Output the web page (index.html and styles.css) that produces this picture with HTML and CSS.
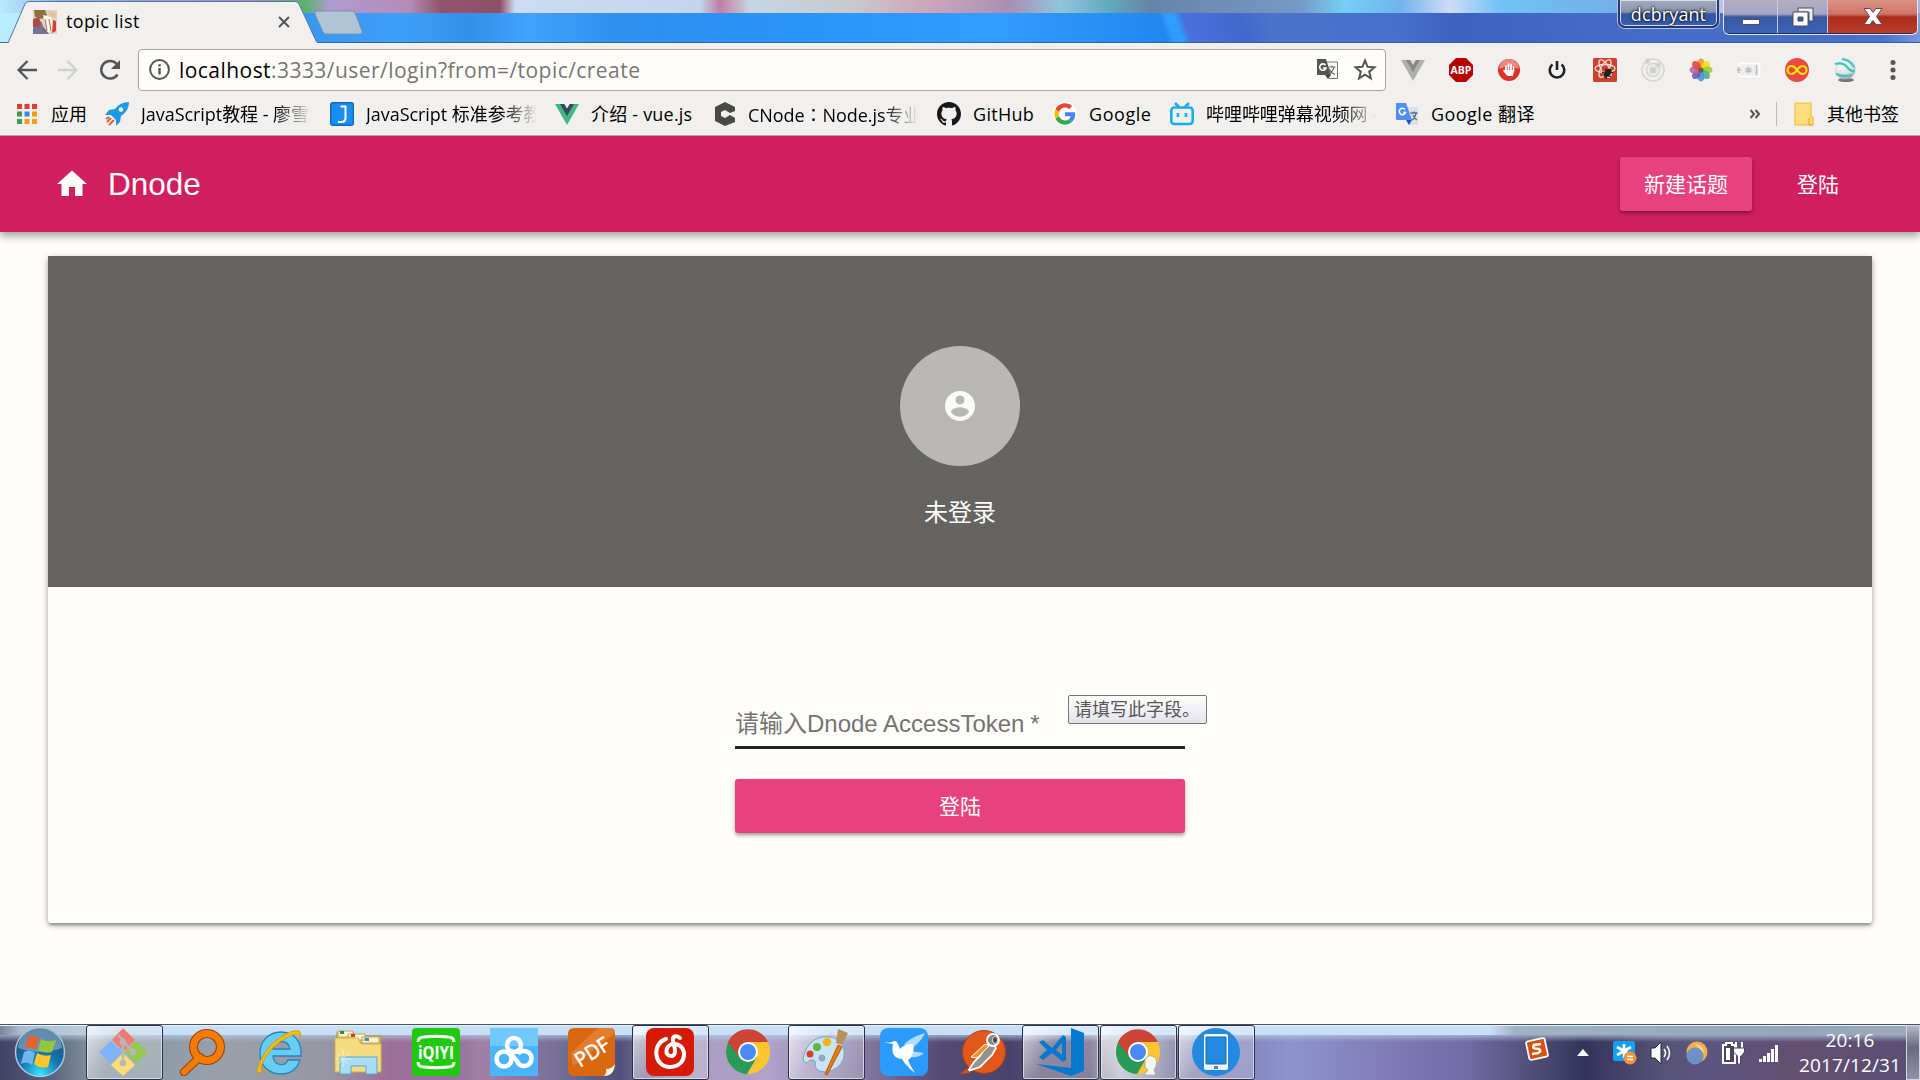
FILE: index.html
```html
<!DOCTYPE html>
<html lang="zh-CN">
<head>
<meta charset="utf-8">
<title>topic list</title>
<link rel="stylesheet" href="styles.css">
</head>
<body>
<header class="titlebar">
  <div class="tab">
    <svg class="tab-shape" width="320" height="43" viewBox="0 0 320 43"><path d="M0 43H8L25 4Q26 1.500 29 1.500H295Q298 1.500 299 4L317 43H320" fill="#f1f0ee" stroke="#53779f"/><path d="M9 43H317" stroke="#f1f0ee" stroke-width="2"/></svg>
    <svg class="favicon" width="24" height="24" viewBox="0 0 24 24"><path fill="#ded4cc" d="M0 0h24v24H0z"/><path fill="#8d6f42" d="M1 0h11l2 5-5 4-7-2z"/><path fill="#b54a4b" d="M0 9l6-2 3 9-4 5-5-4z"/><path fill="#fff6e4" d="M10 5l8 2 3 14-7 1z"/><path fill="#777293" d="M0 18l7-3 5 4 4 5H0z"/><path fill="#d44040" d="M20 10l3 1v10l-4 2z"/><path fill="#e6c29a" d="M15 1l8 2v5l-6-2z"/><path d="M12 9l2 12M16 9l2 12M8 12l4 9M3 10l3 8" stroke="#7d4c40" stroke-width=".8"/></svg>
    <span class="tab-title">topic list</span>
    <svg class="tab-close" width="12" height="12" viewBox="0 0 12 12"><path d="M1 1l10 10M11 1L1 11" stroke="#555" stroke-width="2"/></svg>
  </div>
  <svg class="new-tab" width="50" height="25" viewBox="0 0 50 25"><path d="M3 1h35q2 0 3 2l7 18q1 3-2 3H12q-2 0-3-2L1 4q-1-3 2-3z" fill="#afc4d4" stroke="#7f93a8"/></svg>
  <div class="window-tools">
    <div class="user-name">dcbryant</div>
    <div class="win-buttons">
      <div class="win-btn"><svg width="20" height="8" viewBox="0 0 20 8"><path d="M1.500 1.500h17v5h-17z" fill="#fff" stroke="#4a5160"/></svg></div>
      <div class="win-btn"><svg width="22" height="20" viewBox="0 0 22 20"><path d="M6 1h15v13h-4V5H6z" fill="#eee" stroke="#4a5160"/><path fill-rule="evenodd" d="M1 5h15v14H1zM6 10v4h5v-4z" fill="#fff" stroke="#4a5160"/></svg></div>
      <div class="win-btn win-close"><svg width="20" height="19" viewBox="0 0 20 19"><path d="M1 1.500h6l3 4 3-4h6L13.500 9.500l5.500 8h-6l-3-4-3 4H1l5.500-8z" fill="#fff" stroke="#5b4a55"/></svg></div>
    </div>
  </div>
</header>

<nav class="toolbar">
  <div class="nav-buttons">
    <svg width="20" height="20" viewBox="0 0 20 20" fill="none" stroke="#555" stroke-width="2.300"><path d="M20 10H2M10.500 1L1.600 10l8.900 9"/></svg>
    <svg width="20" height="20" viewBox="0 0 20 20" fill="none" stroke="#d1d0ce" stroke-width="2.300"><path d="M0 10h18M9.500 1l8.900 9-8.900 9"/></svg>
    <svg width="22" height="22" viewBox="0 0 22 22"><path d="M18.500 15.500A8.800 8.800 0 1 1 17.500 4.800" fill="none" stroke="#555" stroke-width="2.500"/><path d="M21 1v9h-9z" fill="#555"/></svg>
  </div>
  <div class="omnibox">
    <svg width="21" height="21" viewBox="0 0 21 21"><circle cx="10.500" cy="10.500" r="9.400" fill="none" stroke="#555" stroke-width="2"/><path d="M9.300 9h2.400v6.500H9.300zM9.300 5.200h2.400v2.400H9.300z" fill="#555"/></svg>
    <span class="url"><b>localhost</b>:3333/user/login?from=/topic/create</span>
    <div class="omni-actions">
      <svg width="23" height="22" viewBox="0 0 23 22"><path d="M9 4h12.500v16.500H13" fill="#fbfbfa" stroke="#777"/><path d="M1 1h9l5 16H2q-1 0-1-1z" fill="#555"/><path d="M9 17h6l-3 4z" fill="#444"/><path d="M9.500 7.200A3.200 3.200 0 1 0 10 10H7" fill="none" stroke="#fff" stroke-width="1.600"/><path d="M12.500 9h7M16 7.500V9m2 0q-1 5-5 7m0-5q2 4 6 5.500" fill="none" stroke="#666" stroke-width="1.200"/></svg>
      <svg width="24" height="23" viewBox="0 0 24 23"><path d="M12 2.500l2.600 6.300 6.900.5-5.300 4.400 1.700 6.600L12 16.700l-5.900 3.600 1.700-6.600-5.300-4.400 6.900-.5z" fill="none" stroke="#555" stroke-width="2"/></svg>
    </div>
  </div>
  <div class="extensions">
    <svg width="24" height="24" viewBox="0 0 24 24"><path d="M0 2h24L12 23z" fill="#b0b0af"/><path d="M5 2h5l2 4 2-4h5l-7 12z" fill="#888"/><path d="M9 2h6l-3 5z" fill="#ddd"/></svg>
    <svg width="24" height="24" viewBox="0 0 24 24"><path d="M7 0h10l7 7v10l-7 7H7l-7-7V7z" fill="#b60000"/><text x="12" y="16" class="abp">ABP</text></svg>
    <svg width="24" height="24" viewBox="0 0 24 24"><circle cx="12" cy="12" r="11" fill="#d93328"/><path d="M2 11a10 10 0 0 1 20 0q-10-5-20 0z" fill="#ed8b80"/><path d="M9 13V8m2.500 5V6M14 13V6.500m2.500 6.500V9M7 12.500l3 4" fill="none" stroke="#fff" stroke-width="1.700" stroke-linecap="round"/><path d="M8.200 12h9.100l-1.500 6h-5z" fill="#fff"/></svg>
    <svg width="24" height="24" viewBox="0 0 24 24" fill="none" stroke="#222" stroke-width="2.600"><path d="M7.500 6.500a7.300 7.300 0 1 0 9 0M12 3v9"/></svg>
    <svg width="24" height="24" viewBox="0 0 24 24"><rect width="24" height="24" rx="1.500" fill="#cb432e"/><g fill="none" stroke="#f6ddd8" stroke-width="1.300"><ellipse cx="12" cy="10.500" rx="10" ry="4"/><ellipse cx="12" cy="10.500" rx="10" ry="4" transform="rotate(60 12 10.500)"/><ellipse cx="12" cy="10.500" rx="10" ry="4" transform="rotate(120 12 10.500)"/></g><ellipse cx="14.500" cy="15" rx="3" ry="5" fill="#222" transform="rotate(40 14.500 15)"/><path d="M9 14l9 5M12 11l8 4M13 21l1-7M18 12l-6 5" stroke="#222" stroke-width="1.300"/></svg>
    <svg width="24" height="24" viewBox="0 0 24 24" fill="none" stroke="#d6d5d3" stroke-width="1.500"><circle cx="12" cy="12" r="11"/><circle cx="12" cy="12" r="6.500"/><circle cx="12" cy="12" r="3" fill="#cfcecd"/><circle cx="6.500" cy="3" r="2" fill="#ccc"/><circle cx="17" cy="7" r="2" fill="#ccc"/></svg>
    <svg width="24" height="24" viewBox="0 0 24 24" fill-opacity=".9"><ellipse cx="12" cy="5.500" rx="3.700" ry="5" fill="#f7941c"/><ellipse cx="12" cy="5.500" rx="3.700" ry="5" fill="#f3df1f" transform="rotate(45 12 12)"/><ellipse cx="12" cy="5.500" rx="3.700" ry="5" fill="#a3cb38" transform="rotate(90 12 12)"/><ellipse cx="12" cy="5.500" rx="3.700" ry="5" fill="#4bb583" transform="rotate(135 12 12)"/><ellipse cx="12" cy="5.500" rx="3.700" ry="5" fill="#4c96e0" transform="rotate(180 12 12)"/><ellipse cx="12" cy="5.500" rx="3.700" ry="5" fill="#6c5cb8" transform="rotate(225 12 12)"/><ellipse cx="12" cy="5.500" rx="3.700" ry="5" fill="#b866a8" transform="rotate(270 12 12)"/><ellipse cx="12" cy="5.500" rx="3.700" ry="5" fill="#e24a38" transform="rotate(315 12 12)"/><circle cx="12" cy="12" r="2.500" fill="#6b4a3a"/></svg>
    <svg width="24" height="24" viewBox="0 0 24 24"><path d="M2.500 5.500h20v13h-20z" fill="#efeeec" stroke="#fff" stroke-width="1.500"/><path d="M1 12h3M2.500 9l-2 3 2 3M11.500 8.500v7M8.500 10.300l6 3.500M14.500 10.300l-6 3.500M19.500 7v10" stroke="#bbb" stroke-width="1.500" fill="none"/></svg>
    <svg width="24" height="24" viewBox="0 0 24 24"><circle cx="12" cy="12" r="12" fill="#ea4a44"/><path d="M12 12c-2-3-3.500-4-5.500-4a4 4 0 0 0 0 8c2 0 3.500-1 5.500-4s3.500-4 5.500-4a4 4 0 0 1 0 8c-2 0-3.500-1-5.500-4z" fill="none" stroke="#f8e400" stroke-width="2.200"/></svg>
    <svg width="24" height="24" viewBox="0 0 24 24"><defs><radialGradient id="ball" cx=".4" cy=".3" r=".8"><stop offset="0" stop-color="#fff"/><stop offset=".6" stop-color="#dddcdb"/><stop offset="1" stop-color="#8b8b8b"/></radialGradient></defs><ellipse cx="13" cy="22" rx="8" ry="2" fill="#777"/><circle cx="12" cy="11" r="10.500" fill="url(#ball)"/><path d="M2 6q8-2 12 3t8 4M3 16q7 3 15 1M9 1q8 1 12 8" fill="none" stroke="#37c7bd" stroke-width="2.200"/></svg>
    <svg width="24" height="24" viewBox="0 0 24 24" fill="#555"><circle cx="12" cy="4.500" r="2.500"/><circle cx="12" cy="12" r="2.500"/><circle cx="12" cy="19.500" r="2.500"/></svg>
  </div>
</nav>

<nav class="bookmarks">
  <a class="bm bm-apps"><svg width="24" height="24" viewBox="0 0 24 24"><path fill="#e33b2e" d="M2 2h5v5H2zM9.500 2h5v5h-5zM17 2h5v5h-5z"/><path fill="#3d9b50" d="M2 9.500h5v5H2zM2 17h5v5H2z"/><path fill="#3a86f0" d="M9.500 9.500h5v5h-5z"/><path fill="#f2a00c" d="M17 9.500h5v5h-5zM9.500 17h5v5h-5zM17 17h5v5h-5z"/></svg><span>应用</span></a>
  <a class="bm bm-js"><svg width="24" height="24" viewBox="0 0 24 24"><path d="M24 0q-9 0-14 7L4 8l-4 5 6 0 5 5v6l4-4 1-6q8-5 8-14z" fill="#1d9ae2"/><circle cx="16" cy="7.500" r="2.200" fill="#fff"/><path d="M2 20l4-4M4 23l5-5M1 17l3-2" stroke="#e2583c" stroke-width="1.800"/></svg><span class="fade">JavaScript教程 - 廖雪</span></a>
  <a class="bm bm-ref"><svg width="24" height="24" viewBox="0 0 24 24"><rect x=".7" y=".7" width="22.600" height="22.600" rx="2" fill="#1a8df2" stroke="#1269c1" stroke-width="1.400"/><path d="M10.500 4.500h5V16q0 4-4 4H8" fill="none" stroke="#fff" stroke-width="2"/></svg><span class="fade">JavaScript 标准参考教</span></a>
  <a class="bm bm-vue"><svg width="24" height="24" viewBox="0 0 24 24"><path d="M0 2h24L12 23z" fill="#41b883"/><path d="M5 2h5l2 4 2-4h5l-7 12z" fill="#35495e"/><path d="M9.300 2h5.400L12 6.500z" fill="#f1f0ee"/></svg><span>介绍 - vue.js</span></a>
  <a class="bm bm-cnode"><svg width="24" height="24" viewBox="0 0 24 24"><path d="M12 0l10 5v4l-5 2-5-3-4 2v4l4 2 5-3 5 3v4l-10 4L2 19V5z" fill="#474b42"/></svg><span class="fade">CNode<span class="colon" lang="zh-TW">：</span>Node.js专业</span></a>
  <a class="bm bm-github"><svg width="24" height="24" viewBox="0 0 16 16"><path fill="#191717" d="M8 0C3.580 0 0 3.580 0 8c0 3.540 2.290 6.530 5.470 7.590.4.070.55-.17.55-.38 0-.19-.01-.82-.01-1.490-2.010.37-2.530-.49-2.690-.94-.09-.23-.48-.94-.82-1.130-.28-.15-.68-.52-.01-.53.63-.01 1.080.58 1.230.82.72 1.210 1.870.87 2.330.66.07-.52.28-.87.51-1.070-1.780-.2-3.640-.89-3.640-3.950 0-.87.31-1.590.82-2.150-.08-.2-.36-1.020.08-2.120 0 0 .67-.21 2.200.82.64-.18 1.320-.27 2-.27s1.360.09 2 .27c1.530-1.040 2.200-.82 2.200-.82.44 1.100.16 1.920.08 2.120.51.56.82 1.270.82 2.150 0 3.070-1.870 3.750-3.650 3.950.29.25.54.73.54 1.480 0 1.070-.01 1.930-.01 2.200 0 .21.15.46.55.38A8.010 8.010 0 0 0 16 8c0-4.420-3.580-8-8-8z"/></svg><span>GitHub</span></a>
  <a class="bm bm-google"><svg width="24" height="24" viewBox="-3 -3 54 54"><circle cx="24" cy="24" r="27" fill="#fff"/><path fill="#EA4335" d="M24 9.500c3.540 0 6.710 1.220 9.210 3.600l6.850-6.850C35.900 2.380 30.470 0 24 0 14.620 0 6.510 5.380 2.560 13.220l7.980 6.190C12.430 13.720 17.740 9.500 24 9.500z"/><path fill="#4285F4" d="M46.980 24.550c0-1.570-.15-3.090-.38-4.550H24v9.020h12.940c-.58 2.960-2.260 5.480-4.780 7.180l7.730 6c4.510-4.180 7.090-10.360 7.090-17.650z"/><path fill="#FBBC05" d="M10.530 28.590c-.48-1.450-.76-2.990-.76-4.590s.27-3.140.76-4.590l-7.980-6.190C.92 16.460 0 20.120 0 24c0 3.880.92 7.540 2.560 10.780z"/><path fill="#34A853" d="M24 48c6.480 0 11.930-2.130 15.890-5.810l-7.730-6c-2.150 1.450-4.920 2.300-8.160 2.300-6.260 0-11.570-4.220-13.470-9.910l-7.980 6.190C6.510 42.620 14.620 48 24 48z"/></svg><span>Google</span></a>
  <a class="bm bm-bili"><svg width="24" height="24" viewBox="0 0 24 24"><rect x="1.300" y="5.500" width="21.400" height="16.500" rx="3" fill="none" stroke="#19aee8" stroke-width="2.600"/><path d="M5 1l4 4M19 1l-4 4M8 11v4M16 11v4" stroke="#19aee8" stroke-width="2.600"/></svg><span class="fade">哔哩哔哩弹幕视频网 -</span></a>
  <a class="bm bm-trans"><svg width="24" height="24" viewBox="0 0 24 24"><path d="M10 5h13v18H14z" fill="#e0e0e0"/><path d="M1 1h10l6 17H2q-1 0-1-1z" fill="#4f8ef5"/><path d="M11 18h6l-3 5z" fill="#2850c0"/><path d="M10 7.500A3.200 3.200 0 1 0 10.500 10.500H8" fill="none" stroke="#fff" stroke-width="1.500"/><path d="M15.500 11h7M19 9.500V11m2 0q-1 5-4 7m1-5q2 4 4 5" fill="none" stroke="#54708c" stroke-width="1.300"/></svg><span>Google 翻译</span></a>
  <div class="bm-end">
    <svg width="10" height="10" viewBox="0 0 10 10" fill="none" stroke="#555" stroke-width="2"><path d="M.5 1L4 5 .5 9M5.500 1L9 5 5.500 9"/></svg>
    <i class="separator"></i>
    <svg width="20" height="24" viewBox="0 0 20 24"><path d="M1 1h16v14h2v8H1z" fill="#fbdc7f" stroke="#eec136" stroke-width="1.200"/><path d="M15 16v7h4" fill="none" stroke="#dda80d"/></svg>
    <span>其他书签</span>
  </div>
</nav>

<main class="page">
  <div class="appbar">
    <svg class="home" width="36" height="36" viewBox="0 0 24 24"><path fill="#fffefb" d="M10 20v-6h4v6h5v-8h3L12 3 2 12h3v8z"/></svg>
    <h1>Dnode</h1>
    <button class="btn raised">新建话题</button>
    <button class="btn flat">登陆</button>
  </div>
  <section class="card">
    <div class="profile">
      <div class="avatar"><svg width="36" height="36" viewBox="0 0 24 24"><path fill="#fafaf7" d="M12 2C6.480 2 2 6.480 2 12s4.480 10 10 10 10-4.480 10-10S17.520 2 12 2zm0 3c1.660 0 3 1.340 3 3s-1.340 3-3 3-3-1.340-3-3 1.340-3 3-3zm0 14.200c-2.500 0-4.710-1.280-6-3.220.03-1.990 4-3.080 6-3.080 1.990 0 5.970 1.090 6 3.080-1.290 1.940-3.500 3.220-6 3.220z"/></svg></div>
      <div class="nick">未登录</div>
    </div>
    <form class="login">
      <div class="field">请输入Dnode AccessToken<span class="star"> *</span><div class="tip">请填写此字段。</div></div>
      <button type="button" class="btn raised wide">登陆</button>
    </form>
  </section>
</main>

<footer class="taskbar">
  <div class="start"><svg width="52" height="52" viewBox="0 0 52 52"><defs><radialGradient id="orb" cx=".5" cy=".95" r=".8"><stop offset="0" stop-color="#35e6ff"/><stop offset=".5" stop-color="#1478b0"/><stop offset="1" stop-color="#1d4f80"/></radialGradient></defs><circle cx="26" cy="26" r="24.500" fill="url(#orb)" stroke="#a7c8dc" stroke-width="1.500"/><path d="M4 22a22 20 0 0 1 44 0q-22 8-44 0z" fill="#bcd5e3" opacity=".45"/><path d="M14 11q5-3 11 1l-3 12q-5-4-11-1z" fill="#e8622c"/><path d="M27 13q6 4 15 1l-4 12q-7 2-14-2z" fill="#93c83d"/><path d="M10 26q5-3 11 1l-3 12q-5-4-11-1z" fill="#6fb8ee"/><path d="M23 27q7 4 14 2l-3 12q-8 2-14-3z" fill="#fbc72b"/></svg></div>
  <div class="apps">
    <div class="task active"><svg width="50" height="48" viewBox="0 0 50 48"><path d="M24 0l12 12-11 11-12-11z" fill="#ef7b74"/><path d="M12 13l11 11-11 12L0 24z" fill="#80b2fc"/><path d="M37 13l12 11-12 12-11-12z" fill="#93c953"/><path d="M24 25l12 12-12 11-12-11z" fill="#fbdc76"/><path d="M19 7l5 5v23M25 14l8 9" fill="none" stroke="#b7b7b7" stroke-width="2.500"/><circle cx="24" cy="14" r="3.300" fill="#b7b7b7"/><circle cx="34" cy="24" r="3.300" fill="#b7b7b7"/><circle cx="24" cy="35" r="3.300" fill="#b7b7b7"/></svg></div>
    <div class="task"><svg width="48" height="48" viewBox="0 0 48 48"><path d="M22 29L6 44" stroke="#a34300" stroke-width="8.500" stroke-linecap="round"/><circle cx="29" cy="19" r="13.500" fill="none" stroke="#a34300" stroke-width="9"/><path d="M22 29L6 44" stroke="#f47b05" stroke-width="6" stroke-linecap="round"/><circle cx="29" cy="19" r="13.500" fill="none" stroke="#f47b05" stroke-width="6.800"/></svg></div>
    <div class="task"><svg width="48" height="48" viewBox="0 0 48 48"><path fill-rule="evenodd" d="M25 4C38 4 46 13 45 28H17c1 10 12 11 15 4h12c-3 9-10 14-19 14C12 46 4 37 4 25S13 4 25 4zM17 21h17c-1-10-16-10-17 0z" fill="#66cdf5" stroke="#2583bd" stroke-width="1.300"/><path d="M8 42Q-3 50 4 34 13 13 34 4q14-5 10 7Q45 3 34 8 14 17 6 36q-4 10 4 6z" fill="#f6bd16" stroke="#dc9c0a"/></svg></div>
    <div class="task"><svg width="48" height="48" viewBox="0 0 48 48"><path d="M3 4h16l2 4h26v35H2z" fill="#d8b95a" stroke="#b79336"/><path d="M4 3h15v6H4zM14 6h17v6H14zM28 9h17v6H28z" fill="#f8f1d6" stroke="#c7a951"/><path d="M6 3h4v3H6z" fill="#2f8c37"/><path d="M17 6h4v3h-4z" fill="#d33d28"/><path d="M31 10h4v3h-4z" fill="#2f92d9"/><path d="M1 10h23l3 6h20v28H1z" fill="#f3dc82" stroke="#d0af4c"/><path d="M6 29h37v17H32v-8H17v8H6z" fill="#a7dcf3" stroke="#59a7cf"/><path d="M9 21v18M1 31h17M4 26l10 10M14 26L4 36" stroke="#fff" opacity=".6"/></svg></div>
    <div class="task"><svg width="48" height="48" viewBox="0 0 48 48"><rect width="48" height="48" rx="4" fill="#1fc90f"/><path d="M6 14q0-5 6-5 12-1.500 24 0 6 0 6 5M6 34q0 5 6 5 12 1.500 24 0 6 0 6-5" fill="none" stroke="#fff" stroke-width="3"/><text x="24" y="30.500" class="qiyi" textLength="36" lengthAdjust="spacingAndGlyphs">iQIYI</text></svg></div>
    <div class="task"><svg width="48" height="48" viewBox="0 0 48 48"><path fill="#4cb4fb" d="M0 0h48v48H0z"/><path fill="#70c8ff" d="M0 0h48v18H0z"/><g fill="none" stroke="#fff" stroke-width="4.500"><circle cx="24" cy="17" r="7"/><circle cx="14" cy="31" r="7.500"/><path d="M28 26a7.500 7.500 0 1 1-1 7L19 24"/></g></svg></div>
    <div class="task"><svg width="48" height="48" viewBox="0 0 48 48"><path d="M6 0h36q5 0 5 5v33l-9 10H6q-6 0-6-6V6q0-6 6-6z" fill="#d96810"/><path d="M3 25L30 0h12q5 0 5 5L5 38z" fill="#ee8f43" opacity=".55"/><path d="M47 36q-3 5-9 5 1 4-2 7 10 0 11-12z" fill="#fff1df"/><text x="24" y="31" class="pdf" transform="rotate(-32 24 24)">PDF</text></svg></div>
    <div class="task active"><svg width="48" height="48" viewBox="0 0 48 48"><rect width="48" height="48" rx="8" fill="#d51a06"/><path d="M20 11C6 15 7 39 24 39c18 0 18-23 4-23-9 0-10 12-3 12 6 0 4-8 2-15-1-5 3-6 7-3" fill="none" stroke="#fff" stroke-width="4" stroke-linecap="round"/></svg></div>
    <div class="task"><svg width="46" height="46" viewBox="0 0 46 46"><circle cx="23" cy="23" r="22" fill="#fbc531"/><path d="M23 23L4 12A22 22 0 0 0 22 45l10-17z" fill="#279b57"/><path d="M3 13A22 22 0 0 1 43 13H23L14 28z" fill="#cc4536"/><circle cx="23" cy="23" r="10" fill="#fff"/><circle cx="23" cy="23" r="8" fill="#4a8af5"/></svg></div>
    <div class="task active"><svg width="48" height="48" viewBox="0 0 48 48"><path d="M1 32C3 15 16 7 28 9c14 2 17 16 12 25-6 10-21 13-26 6-2-4 1-7-3-8-5-1-6 6-10 0z" fill="#c8e4f3" stroke="#6ba5c5"/><circle cx="8" cy="26" r="3.500" fill="#d93f30"/><circle cx="15" cy="19" r="4" fill="#63b445"/><circle cx="25" cy="14" r="4.300" fill="#f6b31c"/><circle cx="20" cy="30" r="3" fill="#a4a5bd" stroke="#7ba8c2"/><path d="M36 17l4 2-15 28-2-1z" fill="#e97b16" stroke="#b75606"/><path d="M36 1l10 4-6 12-6-2z" fill="#b6935b"/></svg></div>
    <div class="task"><svg width="48" height="48" viewBox="0 0 48 48"><rect width="48" height="48" rx="8" fill="#2c9bff"/><path d="M24 17q5-7 21-12-4 9-13 15zM30 23l14 2q-5 5-14 4z" fill="#b5dcff"/><path d="M1 14q7 1 11 0 4-3 6 2l2 5q4-5 12-5 3 2 1 8-1 6-5 8 2 6 7 13-9-7-13-14-12-1-9-15z" fill="#fff"/></svg></div>
    <div class="task"><svg width="48" height="48" viewBox="0 0 48 48"><circle cx="26" cy="24" r="21.500" fill="#e3571b" stroke="#ac4110"/><path d="M29 17l6-2 3 5-4 7-12 12-12 4 6-9 6-6z" fill="#929292" stroke="#fff" stroke-width="1.800"/><circle cx="35" cy="12" r="6" fill="#888" stroke="#fff" stroke-width="1.800"/><ellipse cx="37" cy="12" rx="2.500" ry="3.500" fill="#444" stroke="#ddd"/><path d="M13 29l14-13 4 2-12 12z" fill="#f5942b" stroke="#fff"/><path d="M2 46l7-6 3 5z" fill="#d34e13"/></svg></div>
    <div class="task active"><svg width="48" height="48" viewBox="0 0 48 48"><path d="M35 0l13 5v38l-13 5L0 36l35 4z" fill="#0878ce"/><path fill-rule="evenodd" d="M3 14l4-2 9 8L27 7l3 2v23l-3 2-11-9-9 7-4-3 8-7zM20 22l6 5V15z" fill="#0878ce"/></svg></div>
    <div class="task active"><svg width="46" height="46" viewBox="0 0 46 46"><circle cx="23" cy="23" r="22" fill="#fbc531"/><path d="M23 23L4 12A22 22 0 0 0 22 45l10-17z" fill="#279b57"/><path d="M3 13A22 22 0 0 1 43 13H23L14 28z" fill="#cc4536"/><circle cx="23" cy="23" r="10" fill="#fff"/><circle cx="23" cy="23" r="8" fill="#4a8af5"/><path d="M30 31q2-5 7-4 6 1 4 10l-2 4 2 5H29l4-5-3-3z" fill="#f5f5f0" stroke="#999" stroke-width=".7"/></svg></div>
    <div class="task active"><svg width="48" height="48" viewBox="0 0 48 48"><circle cx="24" cy="24" r="24" fill="#2489e1"/><rect x="12" y="6" width="24" height="36" rx="2" fill="#f3f7fa"/><path d="M14 9h20v27H14z" fill="#2489e1" stroke="#1b6bb8"/><path d="M22 38h4v3h-4z" fill="#4a87bd"/></svg></div>
  </div>
  <div class="tray">
    <svg width="24" height="24" viewBox="0 0 24 24"><rect x="2.500" y="2.500" width="19" height="19" rx="2" fill="#dd4d10" stroke="#fff" stroke-width="1.800" transform="rotate(-12 12 12)"/><path d="M16 7l-7 1q-2 3 1 3.500l4 .5q3 2-1 4l-6 1" fill="none" stroke="#fff" stroke-width="2.700"/></svg>
    <svg class="tray-up" width="12" height="8" viewBox="0 0 12 8"><path d="M6 0l6 7H0z" fill="#fff"/></svg>
    <svg width="24" height="24" viewBox="0 0 24 24"><rect width="22" height="20" rx="2" fill="#14a0f4"/><path d="M11 3v14M4 6l14 8M18 6L4 14" stroke="#fff" stroke-width="2.600"/><circle cx="17" cy="17" r="6.500" fill="#f59339"/><path d="M14 15.500h6M14 18.500h6" stroke="#fff" stroke-width="1.300"/></svg>
    <svg width="24" height="24" viewBox="0 0 24 24"><path d="M2 7h4l6-6v22l-6-6H2z" fill="#fff" stroke="#29263b"/><path d="M15 8q3 4 0 8M18 5q5 7 0 14" fill="none" stroke="#fff" stroke-width="1.500"/></svg>
    <svg width="24" height="24" viewBox="0 0 24 24"><circle cx="12" cy="11" r="10.500" fill="#f1af4b"/><path d="M10 3q9 1 9 10" fill="#ffd684"/><circle cx="10" cy="15" r="8.500" fill="#6f91c4"/></svg>
    <svg width="24" height="24" viewBox="0 0 24 24"><path d="M2 4h3V2h6v2h3v18H2z" fill="#4b4560" stroke="#fff" stroke-width="2"/><path d="M5 7h4v12H5z" fill="#fff"/><path d="M15 1v6M21 1v6" stroke="#fff" stroke-width="2"/><path d="M12.500 7h11v4l-3 4h-1v8h-3v-8l-4-4z" fill="#fff" stroke="#4b4560"/></svg>
    <svg width="24" height="24" viewBox="0 0 24 24" fill="#fff"><path d="M2 18h3v3H2zM6 15h3v6H6zM10 12h3v9h-3zM14 8h3v13h-3zM18 4h3v17h-3z"/></svg>
    <div class="clock"><div>20:16</div><div>2017/12/31</div></div>
    <div class="show-desktop"></div>
  </div>
</footer>
</body>
</html>
```
FILE: styles.css
```css
* { box-sizing: border-box; }
body {
  margin: 0;
  width: 1920px;
  height: 1080px;
  overflow: hidden;
  display: flex;
  flex-direction: column;
  background: #fffefb;
  font-family: "Open Sans", "Noto Sans CJK SC", sans-serif;
  color: #000;
}
svg { display: block; flex: none; }

/* window title bar */
.titlebar {
  height: 43px;
  display: flex;
  align-items: flex-start;
  border-bottom: 1px solid #2c67ae;
  background:
    linear-gradient(90deg, #b9e9fb 0, #8fb5ee 60px, #a28fc3 250px, #5cb16e 305px, #b19ad2 330px, #b58bb6 410px, #93556d 440px, #8f5066 500px, #cddbf3 515px, #c4d6ed 700px, #c17fa0 720px, #c5d6e4 750px, #c8c9cf 850px, #cda5bb 930px, #a98fb5 1010px, #92c5dc 1060px, #61a9bd 1110px, #6784a8 1150px, #7699c6 1300px, #74d0f6 1345px, #6fb3ed 1400px, #cfdcf6 1450px, #71c2f6 1500px, #72aee8 1620px, #bfc2dc 1720px, #a5b5de 1920px) 0 0 / 100% 13px no-repeat,
    linear-gradient(70deg, #0000 1098px, #309cff 1104px, #309cff 1112px, #4a70dc 1120px, #4268ce 1174px, #4b74ca 1200px, #4770cb 1322px, #3d62bf 1370px, #446bc7 1510px, #4a70c8 1770px, #91a5dd 1820px),
    linear-gradient(90deg, #b9ecfc 0, #b9ecfc 25px, #3995f2 300px, #3f9ff8 400px, #348fe8 470px, #41a3fd 530px, #2e8fee 620px, #2a94f9 800px, #339cff 1000px, #2087ef 1160px);
}
.tab {
  position: relative;
  width: 314px;
  height: 43px;
  padding: 0 24px 7px 33px;
  display: flex;
  align-items: center;
}
.tab-shape { position: absolute; left: 0; top: 0; }
.favicon, .tab-title, .tab-close { position: relative; }
.favicon { margin-top: 8px; }
.tab-title { margin: 6px 0 0 9px; font-size: 18px; line-height: 24px; letter-spacing: .35px; }
.tab-close { margin: 8px 0 0 auto; }
.new-tab { margin-top: 10px; }
.window-tools { margin-left: auto; display: flex; gap: 4px; padding-right: 2px; }
.user-name {
  width: 101px;
  height: 28px;
  border: 2px solid #273a6d;
  border-top: 0;
  border-radius: 0 0 7px 7px;
  box-shadow: inset 0 0 0 1px #d4ddf2, 0 0 0 1px #aebfe9;
  background: linear-gradient(#a3abb7 0, #8494b1 12px, #3455a6 14px, #385eb5);
  color: #fff;
  font-size: 18px;
  line-height: 28px;
  text-align: center;
  letter-spacing: .1px;
  text-shadow: 0 0 2px #000, 0 0 3px #000;
}
.win-buttons {
  height: 35px;
  display: flex;
  border: 1px solid #e0e6f5;
  border-top: 0;
  border-radius: 0 0 6px 6px;
  overflow: hidden;
  box-shadow: inset 0 0 0 1px #273052;
}
.win-btn {
  width: 50px;
  height: 33px;
  border-right: 1px solid #c1cce9;
  display: grid;
  place-items: center;
  background: linear-gradient(#b3adc0 0, #a3a6c4 14px, #3757a0 17px, #3c63b8);
}
.win-btn:first-child { width: 54px; padding-top: 10px; }
.win-close { width: 89px; border: 0; background: linear-gradient(#dc9286 0, #cf7466 14px, #a82d1d 17px, #bd3b28); }

/* navigation bar */
.toolbar {
  height: 54px;
  padding: 0 15px 0 17px;
  display: flex;
  align-items: center;
  background: #f1f0ee;
}
.nav-buttons { width: 121px; display: flex; gap: 21px; align-items: center; }
.omnibox {
  width: 1248px;
  height: 42px;
  margin-bottom: 1px;
  padding: 0 8px 0 10px;
  display: flex;
  align-items: center;
  border: 1px solid #a5a4a2;
  border-radius: 4px;
  background: #fffefb;
}
.url { margin-left: 9px; font-size: 21px; line-height: 28px; color: #777573; letter-spacing: .45px; white-space: nowrap; }
.url b { color: #000; font-weight: 400; }
.omni-actions { margin-left: auto; display: flex; gap: 14px; }
.extensions { margin-left: auto; display: flex; gap: 24px; }
.abp { font: bold 10.5px "Open Sans", sans-serif; fill: #fff; text-anchor: middle; }

/* bookmarks bar */
.bookmarks {
  height: 39px;
  padding: 0 21px 4px 15px;
  display: flex;
  align-items: center;
  background: #f1f0ee;
  border-bottom: 1px solid #a9a8a6;
  font-size: 18px;
  line-height: 26px;
  white-space: nowrap;
}
.bm { display: flex; align-items: center; overflow: hidden; letter-spacing: -.05px; }
.bm span { overflow: hidden; }
.fade { -webkit-mask-image: linear-gradient(90deg, #000 calc(100% - 36px), transparent); mask-image: linear-gradient(90deg, #000 calc(100% - 36px), transparent); }
.bm-apps { width: 90px; gap: 12px; }
.bm-js { width: 225px; gap: 12px; }
.bm-js span, .bm-ref span { width: 171px; }
.bm-ref { width: 225px; gap: 12px; }
.bm-vue { width: 158px; gap: 12px; letter-spacing: .2px; }
.bm-cnode { width: 224px; gap: 11px; }
.bm-cnode .fade { width: 170px; }
.bm .colon { font-family: "Noto Sans CJK TC", sans-serif; overflow: visible; }
.bm-github { width: 116px; gap: 12px; letter-spacing: .3px; }
.bm-google { width: 117px; gap: 12px; letter-spacing: .55px; }
.bm-bili { width: 225px; gap: 12px; }
.bm-bili span { width: 171px; }
.bm-trans { gap: 12px; letter-spacing: .45px; }
.bm-end { margin-left: auto; display: flex; align-items: center; }
.separator { width: 1px; height: 24px; margin: 0 17px 0 16px; background: #bbb; }
.bm-end span { margin-left: 13px; }

/* page */
.page { height: 888px; overflow: hidden; background: #fffefb; font-family: "Liberation Sans", "Noto Sans CJK SC", sans-serif; }
.appbar {
  height: 96px;
  padding: 0 36px 0 54px;
  display: flex;
  align-items: center;
  background: #d01f5f;
  color: #fffefb;
  box-shadow: 0 3px 6px -1px #0003, 0 6px 8px #00000024, 0 2px 14px #0000001f;
}
.appbar h1 { margin: 0 auto 0 18px; font-size: 31.500px; font-weight: 400; line-height: 36px; }
.btn {
  width: 132px;
  height: 54px;
  padding: 2px 0 0;
  border: 0;
  border-radius: 3px;
  background: none;
  color: #fffefb;
  font: 400 21px/30px "Liberation Sans", "Noto Sans CJK SC", sans-serif;
}
.raised { background: #e8427e; box-shadow: 0 2px 5px #0003, 0 3px 3px #00000024, 0 4px 2px -3px #0000001f; }
.card {
  margin: 24px 48px;
  height: 667px;
  border-radius: 0 0 3px 3px;
  background: #fffefb;
  box-shadow: 0 2px 7px #0000004d, 0 3px 3px #00000024, 0 4px 2px -2px #0000001f;
}
.profile {
  height: 331px;
  padding-top: 90px;
  display: flex;
  flex-direction: column;
  align-items: center;
  gap: 29px;
  background: #656462;
}
.avatar { width: 120px; height: 120px; border-radius: 50%; background: #b9b8b5; display: grid; place-items: center; }
.nick { font-size: 24px; line-height: 36px; color: #fffefb; }
.login { width: 450px; margin: 0 auto; padding-top: 116px; }
.field {
  position: relative;
  height: 46px;
  margin-bottom: 30px;
  border-bottom: 3px solid #222420;
  font-size: 24px;
  line-height: 42px;
  color: #757472;
  white-space: nowrap;
}
.star { margin-left: -1px; }
.tip {
  position: absolute;
  left: 333px;
  top: -8px;
  width: 139px;
  height: 29px;
  padding-left: 5px;
  border: 1px solid #767676;
  border-radius: 2px;
  background: linear-gradient(#fffefd, #e3e4ee);
  font-size: 18px;
  line-height: 29px;
  color: #575757;
}
.wide { display: block; width: 450px; }

/* taskbar */
.taskbar {
  height: 56px;
  display: flex;
  border-top: 1px solid #45526a;
  box-shadow: inset 0 1px #e7f1fb;
  background:
    linear-gradient(90deg, #77859a 0, #a9bccc 20px, #b5c7d6 60px, #c8dff8 170px, #c9e0f9 1490px, #9fb1c3 1515px, #94a7b9 1800px, #9eacba 1920px) 0 0 / 100% 10px no-repeat,
    linear-gradient(#b4cae0b0 10px, #a5b5cb00 17px),
    linear-gradient(90deg, #414264 0, #59617b 50px, #7c8b99 85px, #8e9ca8 160px, #9aa0aa 230px, #9795a3 330px, #9c6f98 390px, #94749d 450px, #a080a6 485px, #746f94 560px, #514f7a 620px, #a89cc1 690px, #b0a2c9 770px, #8b80a7 850px, #554c73 940px, #49426b 1010px, #6c617f 1090px, #b8bccb 1120px, #7b789f 1175px, #7f7eb3 1220px, #8c93ce 1290px, #8480bb 1370px, #6f6aa5 1470px, #4c4b72 1540px, #33335a 1585px, #565277 1660px, #5c557f 1710px, #634f70 1800px, #594f73 1920px);
}
.start { width: 86px; padding: 1px 0 0 14px; }
.apps { display: flex; gap: 1px; }
.task { width: 77px; height: 55px; display: grid; place-items: center; border: 1px solid transparent; border-radius: 3px; padding: 0 1px 1px 0; }
.task.active {
  border-color: #2c3146;
  box-shadow: inset 0 0 0 1px #e9f0f7b0;
  background: linear-gradient(120deg, #ffffffc0, #ffffff50 40%, #ffffff2e);
}
.qiyi { font: bold 17px "Open Sans", sans-serif; fill: #fff; text-anchor: middle; }
.pdf { font: 20px "Open Sans", sans-serif; fill: #fff; stroke: #fff; stroke-width: .6px; text-anchor: middle; }
.tray { margin-left: auto; display: flex; align-items: center; gap: 12px; color: #fff; }
.tray > svg:first-child { margin: -8px 16px 0 0; }
.tray-up { margin-right: 12px; }
.clock { width: 112px; margin: 0 -12px 0 1px; padding-top: 1px; font-size: 19px; line-height: 25px; text-align: center; letter-spacing: .1px; }
.show-desktop { width: 14px; height: 55px; border: 1px solid #d3d4dd; background: linear-gradient(#b3bac8, #686983 40%, #8f91a9); }
```
